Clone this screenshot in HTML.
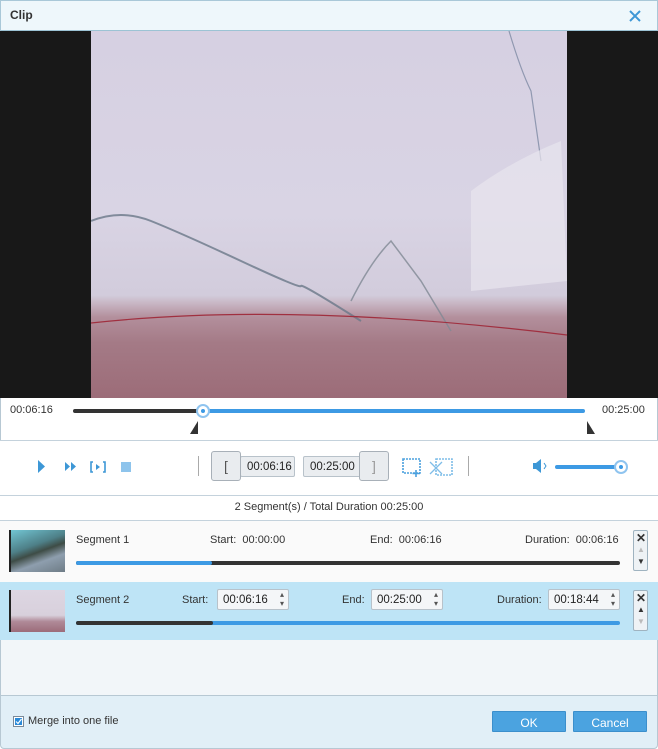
<!DOCTYPE html>
<html><head><meta charset="utf-8"><style>
*{margin:0;padding:0;box-sizing:border-box}
body{width:658px;height:749px;overflow:hidden;font-family:"Liberation Sans",sans-serif;font-size:11px;color:#333;background:#fff;position:relative}
.a{position:absolute}
.title{left:0;top:0;width:658px;height:31px;background:#eef7fb;border:1px solid #a9c8d8;border-bottom:1px solid #9cc3d4}
.video{left:0;top:31px;width:658px;height:367px;background:#181818}
.img{left:91px;top:31px;width:476px;height:367px;background:linear-gradient(180deg,#d6d0e2 0%,#d9d4e4 50%,#d2ccdc 72%,#c9b8c6 74%,#b38f9c 78%,#a47a86 85%,#9c6c78 100%)}
.t{white-space:nowrap}
.bar{height:4px;border-radius:2px}
.spin{background:#f4f6f8;border:1px solid #b8c2ca;border-radius:2px;height:21px;font-size:11.5px;color:#222;padding:4px 0 0 5px}
.arr:after{content:"▴\A▾";white-space:pre;position:absolute;right:4px;top:0px;font-size:8px;line-height:9px;color:#555}
.sbtn{background:#e6eef3;border:1px solid #9fb3c0;border-radius:2px;width:15px}
.btn{background:#4ba3e0;border:1px solid #3b8fcc;color:#fff;font-size:12px;text-align:center;padding-top:4px;height:21px;border-radius:1px}
</style></head><body>
<div class="a title"><div class="a t" style="left:9px;top:7px;font-weight:bold;font-size:12px;color:#333">Clip</div>
<svg class="a" style="left:627px;top:8px" width="14" height="14"><path d="M2 2L12 12M12 2L2 12" stroke="#3d97d6" stroke-width="2"/></svg></div>
<div class="a video"></div>
<div class="a img">
<svg width="476" height="367" style="position:absolute;left:0;top:0"><path d="M0 190 Q30 178 60 190 T150 230 T210 255 T270 290" stroke="#6a7888" stroke-width="2" fill="none" opacity=".8"/><path d="M260 270 Q280 230 300 210 L330 250 L360 300" stroke="#808894" stroke-width="1.5" fill="none" opacity=".8"/><path d="M418 0 Q430 40 440 60 L450 130" stroke="#9098b0" stroke-width="1.2" fill="none"/><path d="M380 160 Q420 130 470 110 L476 250 L380 260Z" fill="#e8e6ee" opacity=".7"/><path d="M0 292 Q200 270 476 304" stroke="#a03040" stroke-width="1.2" fill="none"/></svg></div>
<div class="a" style="left:0;top:398px;width:658px;height:42px;border-left:1px solid #b7c8d3;border-right:1px solid #b7c8d3"></div>
<div class="a t" style="left:10px;top:404px">00:06:16</div>
<div class="a t" style="left:602px;top:404px">00:25:00</div>
<div class="a bar" style="left:73px;top:409px;width:132px;background:#333"></div>
<div class="a bar" style="left:203px;top:409px;width:382px;background:#3d9ae4"></div>
<div class="a" style="left:196px;top:404px;width:14px;height:14px;border-radius:50%;background:#fff;border:2px solid #8fc4ef"><div class="a" style="left:3px;top:3px;width:4px;height:4px;border-radius:50%;background:#3d9ae4"></div></div>
<svg class="a" style="left:190px;top:421px" width="10" height="14"><path d="M8 0V13H0Z" fill="#333"/></svg>
<svg class="a" style="left:587px;top:421px" width="10" height="14"><path d="M0 0V13H8Z" fill="#333"/></svg>
<div class="a" style="left:0;top:440px;width:658px;height:1px;background:#c4d2dc"></div>
<svg class="a" style="left:36px;top:459px" width="100" height="16"><path d="M2 1L9 7.5L2 14Z" fill="#3d97d6"/><path d="M29 3L34 7.5L29 12ZM35 3L40 7.5L35 12Z" fill="#3d97d6"/><path d="M57 3H55V13H57M67 3H69V13H67" stroke="#3d97d6" stroke-width="1.6" fill="none"/><path d="M60 5L64 8L60 11Z" fill="#3d97d6"/><rect x="85" y="3" width="10" height="10" fill="#8ec4ec"/></svg>
<div class="a" style="left:198px;top:456px;width:1px;height:20px;background:#aaa"></div>
<div class="a" style="left:468px;top:456px;width:1px;height:20px;background:#aaa"></div>
<div class="a spin" style="left:240px;top:456px;width:55px;background:#eaedf0;padding-left:6px">00:06:16</div>
<div class="a spin" style="left:303px;top:456px;width:58px;background:#eaedf0;padding-left:6px">00:25:00</div>
<div class="a" style="left:211px;top:451px;width:30px;height:30px;background:#e9ecef;border:1px solid #a8b0b8;border-radius:3px;text-align:center;font-size:14px;padding-top:6px;color:#555">[</div>
<div class="a" style="left:359px;top:451px;width:30px;height:30px;background:#e9ecef;border:1px solid #a8b0b8;border-radius:3px;text-align:center;font-size:14px;padding-top:6px;color:#999">]</div>
<svg class="a" style="left:402px;top:456px" width="52" height="22"><rect x="1" y="3" width="17" height="14" stroke="#4aa0de" stroke-width="1.6" fill="none" stroke-dasharray="2 1"/><path d="M14 14V21M10.5 17.5H18" stroke="#4aa0de" stroke-width="1.6"/><rect x="34" y="3" width="16" height="16" stroke="#7fbde8" stroke-width="1.6" fill="none" stroke-dasharray="2 1"/><path d="M28 6L40 18M40 6L28 18" stroke="#7fbde8" stroke-width="1.3"/></svg>
<svg class="a" style="left:532px;top:458px" width="18" height="16"><path d="M1 5H4L9 1V15L4 11H1Z" fill="#3d97d6"/><path d="M12 5L14 8L12 11" stroke="#3d97d6" fill="none"/></svg>
<div class="a bar" style="left:555px;top:465px;width:66px;background:#3d9ae4"></div>
<div class="a" style="left:614px;top:460px;width:14px;height:14px;border-radius:50%;background:#fff;border:2px solid #8fc4ef"><div class="a" style="left:3px;top:3px;width:4px;height:4px;border-radius:50%;background:#3d9ae4"></div></div>
<div class="a" style="left:0;top:495px;width:658px;height:1px;background:#c4d2dc"></div>
<div class="a t" style="left:0;top:501px;width:658px;text-align:center">2 Segment(s) / Total Duration 00:25:00</div>
<div class="a" style="left:0;top:520px;width:658px;height:1px;background:#c4d2dc"></div>
<div class="a" style="left:0;top:521px;width:658px;height:61px;background:#fafafa"></div>
<div class="a" style="left:9px;top:530px;width:56px;height:42px;background:linear-gradient(160deg,#72c6d4 0%,#4e8088 38%,#3e4c46 52%,#8e9eae 70%,#6e7c86 100%);border-left:2px solid #222"></div>
<div class="a t" style="left:76px;top:534px">Segment 1</div>
<div class="a t" style="left:210px;top:534px">Start:&nbsp; 00:00:00</div>
<div class="a t" style="left:370px;top:534px">End:&nbsp; 00:06:16</div>
<div class="a t" style="left:525px;top:534px">Duration:&nbsp; 00:06:16</div>
<div class="a bar" style="left:76px;top:561px;width:544px;background:#333"></div>
<div class="a bar" style="left:76px;top:561px;width:136px;background:#3d9ae4"></div>
<div class="a sbtn" style="left:633px;top:530px;height:41px;background:#eef2f5"><div class="a" style="left:2px;top:0;font-size:12px;font-weight:bold">✕</div><div class="a" style="left:3px;top:14px;font-size:8px;color:#bbb">▲</div><div class="a" style="left:3px;top:26px;font-size:8px;color:#333">▼</div></div>
<div class="a" style="left:0;top:582px;width:658px;height:58px;background:#bee4f6"></div>
<div class="a" style="left:9px;top:590px;width:56px;height:42px;background:linear-gradient(180deg,#ddd6e2 0%,#d8d0dc 60%,#b08a98 75%,#9c6c7a 100%);border-left:2px solid #222"></div>
<div class="a t" style="left:76px;top:594px">Segment 2</div>
<div class="a t" style="left:182px;top:594px">Start:</div>
<div class="a spin arr" style="left:217px;top:589px;width:72px">00:06:16</div>
<div class="a t" style="left:342px;top:594px">End:</div>
<div class="a spin arr" style="left:371px;top:589px;width:72px">00:25:00</div>
<div class="a t" style="left:497px;top:594px">Duration:</div>
<div class="a spin arr" style="left:548px;top:589px;width:72px">00:18:44</div>
<div class="a bar" style="left:76px;top:621px;width:544px;background:#3d9ae4"></div>
<div class="a bar" style="left:76px;top:621px;width:137px;background:#333"></div>
<div class="a sbtn" style="left:633px;top:590px;height:41px;background:#eef2f5"><div class="a" style="left:2px;top:0;font-size:12px;font-weight:bold">✕</div><div class="a" style="left:3px;top:14px;font-size:8px;color:#333">▲</div><div class="a" style="left:3px;top:26px;font-size:8px;color:#bbb">▼</div></div>
<div class="a" style="left:0;top:640px;width:658px;height:55px;background:#f2f6f9;border-left:1px solid #b7c8d3;border-right:1px solid #b7c8d3"></div>
<div class="a" style="left:0;top:695px;width:658px;height:54px;background:#e1eff7;border:1px solid #b7c8d3;border-radius:0 0 4px 4px"></div>
<div class="a" style="left:13px;top:716px;width:11px;height:11px;border:1px solid #7a8a99;background:#fff"><div class="a" style="left:1px;top:1px;width:7px;height:7px;background:#2a8ad8"></div><svg class="a" style="left:1px;top:1px" width="7" height="7"><path d="M1 3.5L3 5.5L6.5 1" stroke="#fff" stroke-width="1.2" fill="none"/></svg></div>
<div class="a t" style="left:28px;top:715px">Merge into one file</div>
<div class="a btn" style="left:492px;top:711px;width:74px">OK</div>
<div class="a btn" style="left:573px;top:711px;width:74px">Cancel</div>
</body></html>
